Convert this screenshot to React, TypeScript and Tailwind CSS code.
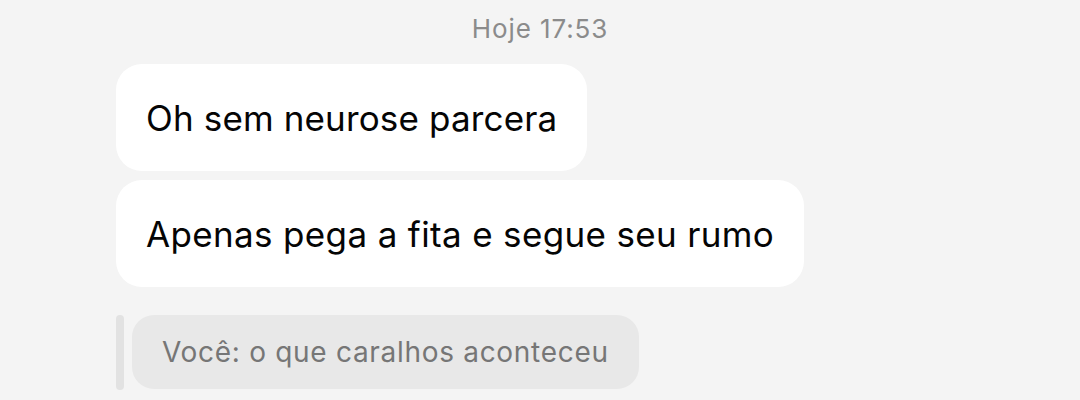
import React from "react";

export default function App() {
  return (
    <div className="w-[1080px] h-[400px] overflow-hidden bg-[#f4f4f4] flex flex-col" style={{ fontFamily: "Inter, Roboto, 'Liberation Sans', sans-serif" }}>
      <div className="h-[64px] flex items-start justify-center pt-[13px]">
        <span className="text-[26px] leading-[32px] tracking-[0.9px] text-[#8b8b8b]">Hoje 17:53</span>
      </div>
      <div className="pl-[116px] flex flex-col items-start gap-[9px]">
        <div className="h-[107px] px-[30px] flex items-center bg-white rounded-[26px]">
          <span className="text-[35px] leading-[44px] tracking-[0.15px] text-[#050505]">Oh sem neurose parcera</span>
        </div>
        <div className="h-[107px] px-[30px] flex items-center bg-white rounded-[26px]">
          <span className="text-[35px] leading-[44px] tracking-[0.35px] text-[#050505]">Apenas pega a fita e segue seu rumo</span>
        </div>
        <div className="mt-[19px] flex items-start gap-[8px]">
          <div className="w-[8px] h-[75px] rounded-full bg-[#e2e2e2]" />
          <div className="h-[74px] px-[30px] flex items-center bg-[#e8e8e8] rounded-[22px]">
            <span className="text-[28px] leading-[36px] tracking-[0.7px] text-[#767676]">Você: o que caralhos aconteceu</span>
          </div>
        </div>
      </div>
    </div>
  );
}
